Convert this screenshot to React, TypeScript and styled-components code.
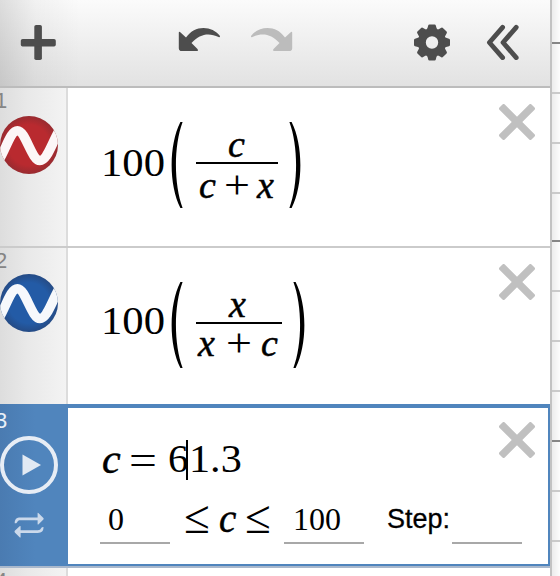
import React from "react";
import styled, { createGlobalStyle } from "styled-components";

const Global = createGlobalStyle`
  * { box-sizing: border-box; }
  body { margin: 0; background: #fff; overflow: hidden; }
  svg { display: block; flex: none; }
`;

const serif = `"Liberation Serif", "Times New Roman", serif`;
const sans = `"Liberation Sans", Arial, sans-serif`;

const Page = styled.div`
  display: flex;
  width: 560px;
  height: 576px;
  overflow: hidden;
  font-family: ${sans};
`;

const Panel = styled.main`
  width: 552px;
  flex: none;
  border-right: 2px solid #c2c2c2;
  background: #fff;
`;

const Toolbar = styled.header`
  display: flex;
  align-items: flex-start;
  height: 88px;
  padding: 24px 0 0 20px;
  border-bottom: 2px solid #bcbcbc;
  background:
    linear-gradient(90deg, rgba(0, 0, 0, 0.12), rgba(0, 0, 0, 0.04) 35px, transparent 80px),
    linear-gradient(#fbfbfb, #e2e2e2);
`;

const ToolButton = styled.span<{ $gap?: number }>`
  margin-left: ${(p) => p.$gap ?? 0}px;
`;

const Row = styled.section<{ $height: number; $last?: boolean }>`
  display: flex;
  height: ${(p) => p.$height}px;
  border-bottom: ${(p) => (p.$last ? "0" : "2px solid #cbcbcb")};
`;

const ActiveRow = styled.section`
  display: flex;
  height: 164px;
  border-bottom: 2px solid #a9b8cc;
`;

const Gutter = styled.aside<{ $active?: boolean }>`
  width: 68px;
  flex: none;
  overflow: hidden;
  border-right: 2px solid ${(p) => (p.$active ? "#5085bd" : "#dcdcdc")};
  padding-top: ${(p) => (p.$active ? 4 : 0)}px;
  color: ${(p) => (p.$active ? "#e9f0f8" : "#858585")};
  background: ${(p) =>
    p.$active
      ? "linear-gradient(90deg, #4a7bb1, #5085bd 35px)"
      : "linear-gradient(90deg, #dddddd, #e9e9e9 28px, #f3f3f3)"};
`;

const Index = styled.div<{ $height?: number }>`
  height: ${(p) => p.$height ?? 28}px;
  margin-left: -5px;
  padding-top: 1px;
  font-size: 22px;
  line-height: 23px;
`;

const Body = styled.div`
  display: flex;
  flex: 1;
  justify-content: space-between;
  padding: 16px 15px 0 32px;
`;

const ActiveBody = styled.div`
  flex: 1;
  border: solid #5085bd;
  border-width: 4px 2px 2px 0;
  padding: 14px 13px 0 32px;
`;

const Line = styled.div`
  display: flex;
  align-items: flex-start;
`;

const TopLine = styled(Line)`
  height: 81px;
  justify-content: space-between;
`;

type SymProps = {
  $size?: number;
  $w: number;
  $top?: number;
  $left?: number;
  $italic?: boolean;
  $sx?: number;
};

const Sym = styled.span<SymProps>`
  display: block;
  flex: none;
  width: ${(p) => p.$w}px;
  margin: ${(p) => p.$top ?? 0}px 0 0 ${(p) => p.$left ?? 0}px;
  font: ${(p) => (p.$italic ? "italic " : "")}${(p) => p.$size ?? 41}px/1 ${serif};
  white-space: nowrap;
  color: #000;
  -webkit-text-stroke: ${(p) => (p.$italic ? 0.5 : 0)}px #000;
  transform: scaleX(${(p) => p.$sx ?? 1});
  transform-origin: left;
`;

const Fraction = styled.div<{ $w: number }>`
  width: ${(p) => p.$w}px;
  margin: 11px 11px 0 13px;
`;

const Numerator = styled.div<{ $pad: number }>`
  display: flex;
  height: 49px;
  padding-left: ${(p) => p.$pad}px;
  border-bottom: 2px solid #000;
`;

const Denominator = styled.div<{ $top?: number }>`
  display: flex;
  padding: ${(p) => p.$top ?? 0}px 0 0 2px;
`;

const Field = styled.div<{ $w: number; $left?: number }>`
  width: ${(p) => p.$w}px;
  height: 41px;
  flex: none;
  margin-left: ${(p) => p.$left ?? 0}px;
  padding-left: 8px;
  border-bottom: 2px solid #a8a8a8;
`;

const Step = styled.label`
  width: 65px;
  flex: none;
  margin: 1px 0 0 23px;
  font-size: 27px;
  line-height: 30px;
  -webkit-text-stroke: 0.3px #000;
`;

const Caret = styled.i`
  width: 2px;
  height: 40px;
  margin: 18px 0 0 -2px;
  background: #000;
`;

const Graph = styled.div`
  display: flex;
  flex-direction: column;
  width: 8px;
  height: 576px;
  background: linear-gradient(90deg, #ececec, #fcfcfc);
`;

const GridLine = styled.i<{ $gap: number; $major?: boolean }>`
  flex: none;
  height: 2px;
  margin-top: ${(p) => p.$gap}px;
  background: ${(p) => (p.$major ? "#858585" : "#cacaca")};
`;

const ParenSlot = styled.span`
  margin-top: 18px;
`;

const Plus = () => (
  <svg width="36" height="36" viewBox="0 0 36 36" fill="#4d4d4d">
    <rect x="14.3" y="1" width="7.6" height="35" rx="1.8" />
    <rect x="0.8" y="15" width="35" height="7.6" rx="1.8" />
  </svg>
);

const CurvedArrow = ({ flip }: { flip?: boolean }) => (
  <svg width="44" height="30" viewBox="0 0 44 30">
    <path
      transform={flip ? "translate(44 0) scale(-1 1)" : undefined}
      fill={flip ? "#bcbcbc" : "#4d4d4d"}
      d="M0.8 8.8Q0.8 7 2.3 8.2L8 13.4C13 7 18.5 4 25.5 4C32 4 38 6.8 41.8 11.8C42.4 12.8 41.6 13.6 40.6 12.9C31 8.5 22 9.5 13.5 19L19.5 25Q20.7 27 18.8 27H3.8Q0.8 27 0.8 24.2Z"
    />
  </svg>
);

const Gear = () => (
  <svg width="36" height="37" viewBox="-18 -18.5 36 37">
    <circle r="10.1" fill="none" stroke="#4d4d4d" strokeWidth="7.8" />
    {[0, 45, 90, 135, 180, 225, 270, 315].map((a) => (
      <path key={a} transform={`rotate(${a})`} fill="#4d4d4d" d="M-6-11.7Q-4.4-13.8-3.8-17Q-3.6-18-2.6-18H2.6Q3.6-18 3.8-17Q4.4-13.8 6-11.7Z" />
    ))}
  </svg>
);

const Chevrons = () => (
  <svg width="34" height="36" viewBox="0 0 34 36">
    <path d="M16.6 3.4L3.4 18.5L16.6 33.6M30.2 3.4L17 18.5L30.2 33.6" fill="none" stroke="#4d4d4d" strokeWidth="4.8" strokeLinecap="round" strokeLinejoin="round" />
  </svg>
);

const Close = () => (
  <svg width="36" height="36" viewBox="0 0 36 36">
    <g fill="#c0c0c0" transform="rotate(45 18 18)">
      <rect x="14.2" y="-4.7" width="7.6" height="45.4" rx="2" />
      <rect x="-4.7" y="14.2" width="45.4" height="7.6" rx="2" />
    </g>
  </svg>
);

const Wave = ({ id, color, edge }: { id: string; color: string; edge: string }) => (
  <svg width="58" height="58" viewBox="0 0 58 58">
    <defs>
      <radialGradient id={id}>
        <stop offset="0.7" stopColor={color} />
        <stop offset="1" stopColor={edge} />
      </radialGradient>
      <clipPath id={`${id}-clip`}><circle cx="29" cy="29" r="29" /></clipPath>
    </defs>
    <circle cx="29" cy="29" r="29" fill={`url(#${id})`} />
    <path clipPath={`url(#${id}-clip)`} d="M-1 44C6 33 10.5 14.7 17.5 14.7C25.5 14.7 31.5 44.5 40 44.5C47 44.5 51.5 28 59 15" fill="none" stroke="#fff" strokeOpacity="0.96" strokeWidth="9.6" />
  </svg>
);

const Play = () => (
  <svg width="58" height="58" viewBox="0 0 58 58">
    <circle cx="29" cy="29" r="27" fill="none" stroke="#e7edf5" strokeWidth="4" />
    <path d="M22.5 18.5V39.5L41 29Z" fill="#e1e9f3" />
  </svg>
);

const Loop = () => (
  <svg width="58" height="48" viewBox="0 0 58 48">
    <g fill="#cbd9eb">
      <path id="loop-arrow" d="M14.7 29.3C14.7 25.2 16.4 23.5 20.5 23.5H37.6V19Q38 18.6 38.6 19.2L43.4 24Q44 24.8 43.4 25.6L38.6 30.2Q38 30.7 37.6 30.2V26.2H20.5C18.5 26.2 17.8 26.7 17 28.4Q16.3 29.4 14.7 29.3Z" />
      <use href="#loop-arrow" transform="rotate(180 29.1 31.2)" />
    </g>
  </svg>
);

const Paren = ({ right }: { right?: boolean }) => (
  <svg width="12" height="86" viewBox="0 0 12 86">
    <path transform={right ? "translate(12 0) scale(-1 1)" : undefined} d="M9.4 0H11.6C2.7 24 2.7 62 11.6 86H9.4C-2.3 63-2.3 23 9.4 0Z" />
  </svg>
);

const lines = [
  [42, 1], [48, 0], [48, 0], [48, 0], [46, 1], [48, 0], [48, 0], [48, 0], [48, 1], [48, 0], [48, 0],
];

export default function App() {
  return (
    <Page>
      <Global />
      <Panel>
        <Toolbar>
          <ToolButton><Plus /></ToolButton>
          <ToolButton $gap={122}><CurvedArrow /></ToolButton>
          <ToolButton $gap={27}><CurvedArrow flip /></ToolButton>
          <ToolButton $gap={121}><Gear /></ToolButton>
          <ToolButton $gap={36}><Chevrons /></ToolButton>
        </Toolbar>

        <Row $height={160}>
          <Gutter><Index>1</Index><Wave id="red" color="#b92a2f" edge="#982b30" /></Gutter>
          <Body>
            <Line>
              <Sym $w={70} $left={1} $top={38} $sx={1.04}>100</Sym>
              <ParenSlot><Paren /></ParenSlot>
              <Fraction $w={82}>
                <Numerator $pad={32}><Sym $italic $size={38} $w={20} $top={10}>c</Sym></Numerator>
                <Denominator $top={2}>
                  <Sym $italic $size={38} $w={25} $left={1}>c</Sym>
                  <Sym $size={40} $w={32} $sx={1.15} $top={-1}>+</Sym>
                  <Sym $italic $size={38} $w={20} $left={1}>x</Sym>
                </Denominator>
              </Fraction>
              <ParenSlot><Paren right /></ParenSlot>
            </Line>
            <Close />
          </Body>
        </Row>

        <Row $height={156} $last>
          <Gutter><Index $height={26}>2</Index><Wave id="blue" color="#235ba6" edge="#254b85" /></Gutter>
          <Body>
            <Line>
              <Sym $w={70} $left={1} $top={36} $sx={1.04}>100</Sym>
              <ParenSlot><Paren /></ParenSlot>
              <Fraction $w={86}>
                <Numerator $pad={33}><Sym $italic $size={38} $w={20} $top={10}>x</Sym></Numerator>
                <Denominator>
                  <Sym $italic $size={38} $w={28}>x</Sym>
                  <Sym $size={40} $w={35} $sx={1.15} $top={-1}>+</Sym>
                  <Sym $italic $size={38} $w={20}>c</Sym>
                </Denominator>
              </Fraction>
              <ParenSlot><Paren right /></ParenSlot>
            </Line>
            <Close />
          </Body>
        </Row>

        <ActiveRow>
          <Gutter $active><Index>3</Index><Play /><Loop /></Gutter>
          <ActiveBody>
            <TopLine>
              <Line>
                <Sym $italic $size={42} $w={27} $left={2} $top={16}>c</Sym>
                <Sym $size={43} $w={39} $top={16} $sx={1.15}>=</Sym>
                <Sym $w={20} $top={16}>6</Sym>
                <Caret />
                <Sym $w={54} $left={1} $top={16} $sx={1.03}>1.3</Sym>
              </Line>
              <Close />
            </TopLine>
            <Line>
              <Field $w={70}><Sym $size={32} $w={20}>0</Sym></Field>
              <Sym $size={47} $w={35} $left={14} $top={-9}>≤</Sym>
              <Sym $italic $size={39} $w={26} $top={-4}>c</Sym>
              <Sym $size={47} $w={24} $top={-9}>≤</Sym>
              <Field $w={80} $left={15}><Sym $size={32} $w={50} $left={1}>100</Sym></Field>
              <Step>Step:</Step>
              <Field $w={70} />
            </Line>
          </ActiveBody>
        </ActiveRow>

        <Row $height={20} $last>
          <Gutter><Index>4</Index></Gutter>
        </Row>
      </Panel>
      <Graph>
        {lines.map(([gap, major], i) => <GridLine key={i} $gap={gap} $major={!!major} />)}
      </Graph>
    </Page>
  );
}
